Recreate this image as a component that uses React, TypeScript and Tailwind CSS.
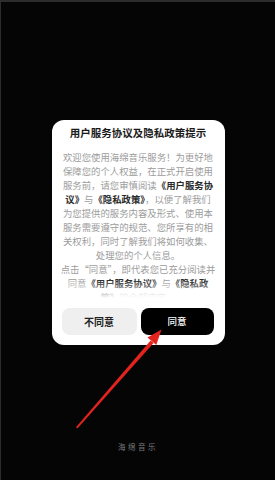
import React from "react";

const B = ({ children }: { children: React.ReactNode }) => (
  <span className="font-bold text-[#2a2a2a]">{children}</span>
);

export default function App() {
  const lines: React.ReactNode[] = [
    <>欢迎您使用海绵音乐服务！为更好地</>,
    <>保障您的个人权益，在正式开启使用</>,
    <>服务前，请您审慎阅读<B>《用户服务协</B></>,
    <><B>议》</B>与<B>《隐私政策》</B>，以便了解我们</>,
    <>为您提供的服务内容及形式、使用本</>,
    <>服务需要遵守的规范、您所享有的相</>,
    <>关权利，同时了解我们将如何收集、</>,
    <>处理您的个人信息。</>,
    <>点击“同意”，即代表您已充分阅读并</>,
    <>同意<B>《用户服务协议》</B>与<B>《隐私政</B></>,
    <><B>策》</B>的全部内容。</>,
  ];
  return (
    <div
      className="relative w-[275px] h-[480px] bg-[#050505] border-t-2 border-l border-[#2c2c2c] flex flex-col items-center overflow-hidden"
      style={{ fontFamily: '"Noto Sans CJK SC", "Noto Sans", sans-serif' }}
    >
      <div className="mt-[118px] w-[173px] h-[225px] bg-white rounded-[12px] flex flex-col items-center">
        <div className="mt-[6px] h-[14px] leading-[14px] text-[10.5px] font-bold text-[#1a1a1a]">
          用户服务协议及隐私政策提示
        </div>
        <div className="relative mt-[10px] h-[148px] w-full overflow-hidden">
          <div className="flex flex-col items-center text-[9.4px] leading-[14px] text-[#9c9c9c] whitespace-nowrap">
            {lines.map((l, i) => (
              <div key={i}>{l}</div>
            ))}
          </div>
          <div className="absolute left-0 right-0 bottom-0 h-[18px] bg-gradient-to-b from-white/0 to-white" />
        </div>
        <div className="mt-[10px] w-full px-[10px] flex gap-[4px]">
          <div className="w-[75px] h-[27px] rounded-[8px] bg-[#efefef] flex items-center justify-center text-[10px] font-bold text-[#222]">
            不同意
          </div>
          <div className="w-[73px] h-[27px] rounded-[8px] bg-black flex items-center justify-center text-[9.5px] font-medium text-white">
            同意
          </div>
        </div>
      </div>
      <div className="flex-1" />
      <div className="mb-[28px] text-[7.5px] tracking-[2.5px] text-[#7a7a7a]">海绵音乐</div>
      <svg
        className="absolute left-0 top-0 pointer-events-none"
        width="275"
        height="480"
        viewBox="0 0 275 480"
      >
        <polygon points="75,425.2 76.6,426.3 152.6,341 149.6,338.4" fill="#e3231e" />
        <polygon points="160.5,327.5 146.5,335.5 155.3,343" fill="#e3231e" />
      </svg>
    </div>
  );
}
